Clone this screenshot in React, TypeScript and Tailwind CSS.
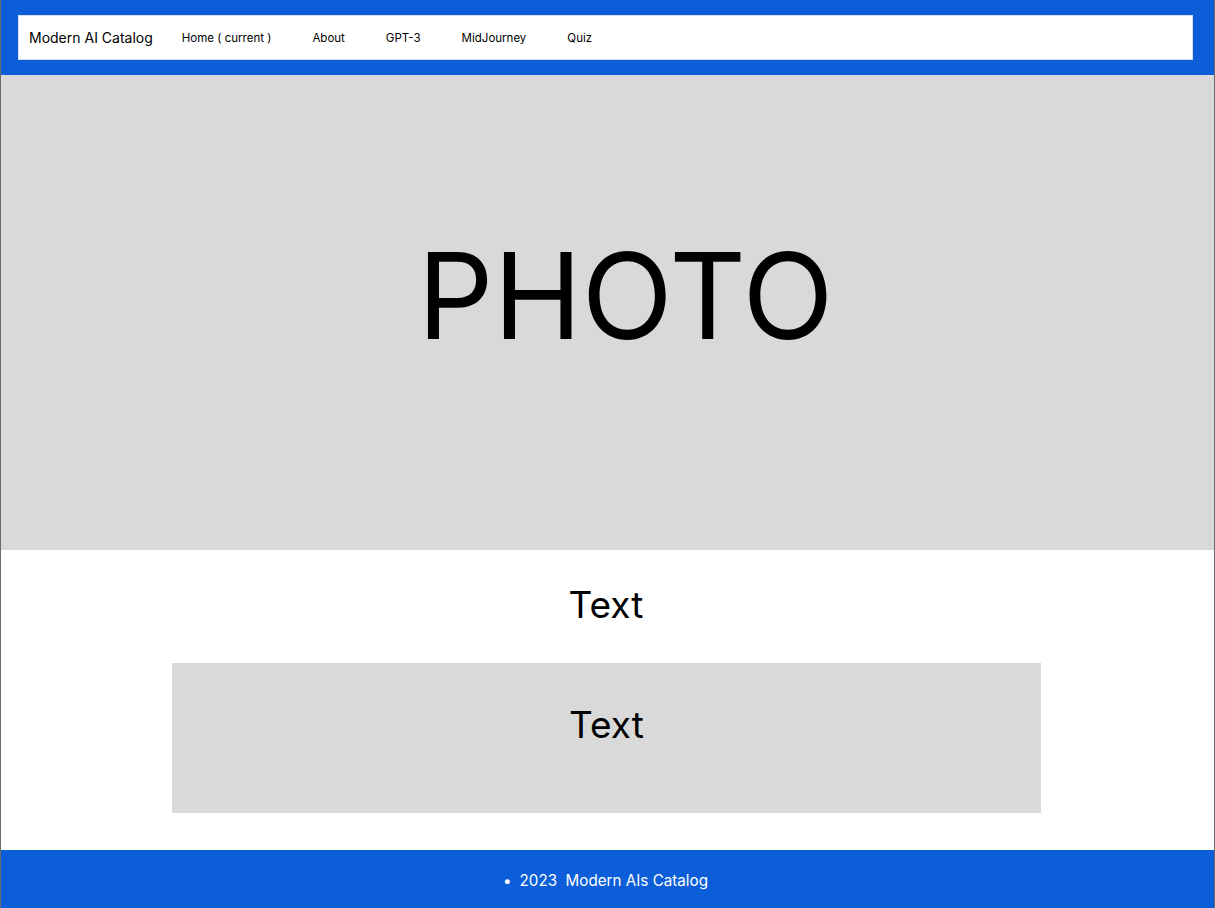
import React from 'react';

const navLinks = ['Home ( current )', 'About', 'GPT-3', 'MidJourney', 'Quiz'];

const App = () => {
    return (
        <div
            className="min-h-[908px] flex flex-col border-x border-[#6b6b6b] bg-white text-black"
            style={{ fontFamily: 'Inter, "Noto Sans", sans-serif' }}
        >
            {/* Barre de navigation */}
            <header className="h-[75px] bg-[#0b5ed7] pt-[15px] pl-[17px] pr-[21px]">
                <nav className="h-[45px] bg-white border border-[#cfe0f8] flex items-center pl-[10px]">
                    <span className="text-[14px] leading-none">Modern AI Catalog</span>
                    <ul className="flex items-center ml-[29px] gap-[41px] text-[11.5px] leading-none pt-[2px]">
                        {navLinks.map(link => (
                            <li key={link}>{link}</li>
                        ))}
                    </ul>
                </nav>
            </header>

            {/* Photo */}
            <section className="h-[475px] bg-[#d9d9d9] flex items-center justify-center pb-[32px] pl-[36px]">
                <span className="text-[119px] leading-none">PHOTO</span>
            </section>

            {/* Contenu */}
            <section className="flex-1 flex flex-col items-center pt-[33px]">
                <h2 className="text-[37px] leading-[44px] ml-[-3px]">Text</h2>
                <div className="mt-[36px] w-[869px] h-[150px] bg-[#d9d9d9] flex justify-center pt-[40px] ml-[-2px]">
                    <p className="text-[37px] leading-[44px]">Text</p>
                </div>
            </section>

            <footer className="h-[58px] bg-[#0b5ed7] flex items-center justify-center text-white text-[15.2px] mt-[37px] pt-[5px] pr-[4px]">
                <span className="mr-[8px]">•</span>
                <span className="whitespace-pre">2023  Modern AIs Catalog</span>
            </footer>
        </div>
    );
};

export default App;
